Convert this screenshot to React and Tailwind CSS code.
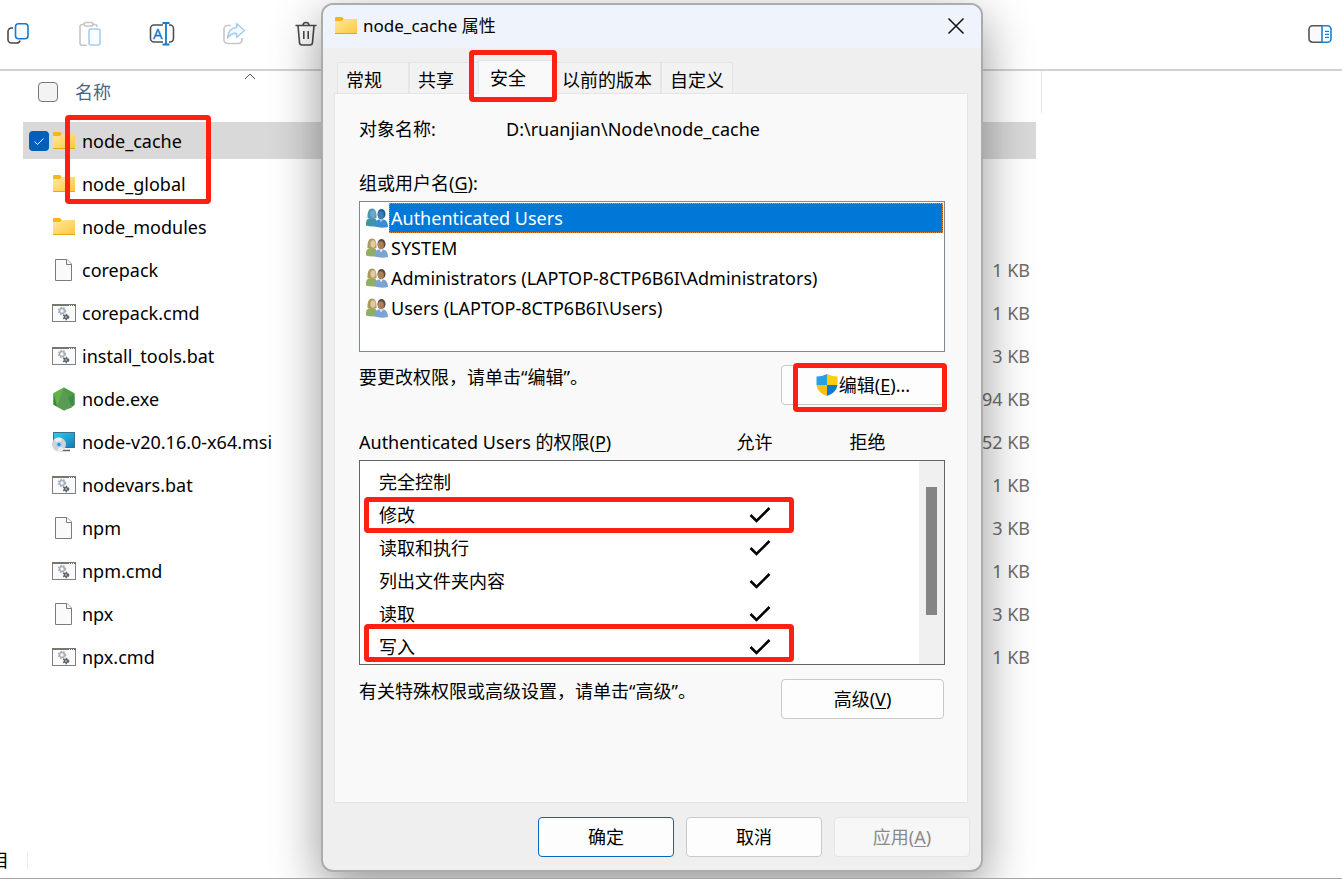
import React, { useState } from 'react';

const files = [
  { name: 'node_cache', type: 'folder', size: '' },
  { name: 'node_global', type: 'folder', size: '' },
  { name: 'node_modules', type: 'folder', size: '' },
  { name: 'corepack', type: 'file', size: '1 KB' },
  { name: 'corepack.cmd', type: 'script', size: '1 KB' },
  { name: 'install_tools.bat', type: 'script', size: '3 KB' },
  { name: 'node.exe', type: 'node', size: '94 KB' },
  { name: 'node-v20.16.0-x64.msi', type: 'installer', size: '52 KB' },
  { name: 'nodevars.bat', type: 'script', size: '1 KB' },
  { name: 'npm', type: 'file', size: '3 KB' },
  { name: 'npm.cmd', type: 'script', size: '1 KB' },
  { name: 'npx', type: 'file', size: '3 KB' },
  { name: 'npx.cmd', type: 'script', size: '1 KB' },
];

const users = [
  'Authenticated Users',
  'SYSTEM',
  'Administrators (LAPTOP-8CTP6B6I\\Administrators)',
  'Users (LAPTOP-8CTP6B6I\\Users)',
];

const permissions = [
  { name: '完全控制', allow: false },
  { name: '修改', allow: true },
  { name: '读取和执行', allow: true },
  { name: '列出文件夹内容', allow: true },
  { name: '读取', allow: true },
  { name: '写入', allow: true },
];

const tabs = ['常规', '共享', '安全', '以前的版本', '自定义'];

/* ---------- file icons ---------- */

const FolderIcon = () => (
  <svg width="24" height="24" viewBox="0 0 24 24" className="shrink-0">
    <defs>
      <linearGradient id="folder" x1="0" y1="0" x2="1" y2="1">
        <stop offset="0" stopColor="#ffe8a3" />
        <stop offset="1" stopColor="#fdc93b" />
      </linearGradient>
    </defs>
    <path d="M1 4q0-1 1-1h5.500q1 0 1.500 1l.8 1H22q1 0 1 1v4H1z" fill="#f7b519" />
    <path d="M1 7h7l1.500-2H23v14.500H1z" fill="url(#folder)" />
    <path d="M1 19.500h22" stroke="#eaa51c" />
  </svg>
);

const FileIcon = () => (
  <svg width="24" height="24" viewBox="0 0 24 24" className="shrink-0" fill="#fafafa" stroke="#7b7b78">
    <path d="M3.500 1.500h11.500l4.500 4.500v16.500h-16z" />
    <path d="M14.500 1.500v5h5" fill="#fff" />
  </svg>
);

const Gear = ({ cx, cy, r, color }) => (
  <g fill="none" stroke={color}>
    <circle cx={cx} cy={cy} r={r + 1} strokeWidth="1.600" strokeDasharray="1.500 1.300" />
    <circle cx={cx} cy={cy} r={r} strokeWidth="1.500" />
  </g>
);

const ScriptIcon = () => (
  <svg width="24" height="24" viewBox="0 0 24 24" className="shrink-0">
    <rect x="0.500" y="3.500" width="23" height="17" fill="#fafafa" stroke="#7f7f7f" />
    <path d="M0 4h24" stroke="#77776f" strokeWidth="2" />
    <path d="M17 4.500h5" stroke="#e8e8e8" strokeDasharray="1 1" />
    <Gear cx={10} cy={10} r={2.400} color="#a6b0ba" />
    <Gear cx={14} cy={16} r={1.500} color="#5c6368" />
  </svg>
);

const NodeIcon = () => (
  <svg width="24" height="24" viewBox="0 0 24 24" className="shrink-0">
    <path d="M12 0.500l10.500 5.700v11.600L12 23.500 1.500 17.800V6.200z" fill="#4f9b45" />
    <path d="M12 0.500l8 20L12 23.500 5 19.500z" fill="#5a9a55" />
    <path d="M12 0.500l-10.500 5.700L5 19.500z" fill="#63b14d" />
    <path d="M1.500 6.200L5 19.500l-3.500-2z" fill="#3c8440" />
    <path d="M22.500 7v10.800L20 20l-4-9z" fill="#418c46" />
  </svg>
);

const InstallerIcon = () => (
  <svg width="24" height="24" viewBox="0 0 24 24" className="shrink-0">
    <defs>
      <linearGradient id="screen" x1="0" y1="0" x2="1" y2="1">
        <stop offset="0" stopColor="#2fd0e6" />
        <stop offset="1" stopColor="#1479bd" />
      </linearGradient>
    </defs>
    <rect x="1.500" y="2.500" width="21" height="15" fill="url(#screen)" stroke="#3d6f86" />
    <path d="M9 20.500h9" stroke="#59656d" strokeWidth="1.500" />
    <circle cx="7" cy="14.500" r="7" fill="#cfd3d6" />
    <path d="M7 14.500L2 9.500a7 7 0 0 1 8-1.200zM7 14.500l5 5a7 7 0 0 1-6 2z" fill="#eceeef" />
    <circle cx="7" cy="14.500" r="3" fill="#a9d4f3" />
    <circle cx="7" cy="14.500" r="1.700" fill="#2c8fdb" />
  </svg>
);

const fileIcons = {
  folder: FolderIcon,
  file: FileIcon,
  script: ScriptIcon,
  node: NodeIcon,
  installer: InstallerIcon,
};

/* ---------- toolbar icons ---------- */

const CopyIcon = () => (
  <svg width="24" height="26" viewBox="0 0 24 26" fill="none" strokeWidth="1.600">
    <path d="M7 7H5.500A3.500 3.500 0 0 0 2 10.500v8A3.500 3.500 0 0 0 5.500 22h5q3 0 3.500-2.500" stroke="#4a4a4a" />
    <rect x="9.500" y="2.800" width="12.500" height="15" rx="3" fill="#f6fbff" stroke="#1779cf" />
  </svg>
);

const PasteIcon = () => (
  <svg width="24" height="26" viewBox="0 0 24 26" fill="none" strokeWidth="1.600">
    <path d="M6 3.500H4A2 2 0 0 0 2 5.500v16.700a2 2 0 0 0 2 2h5M14.500 3.500h2.500a2 2 0 0 1 2 2V6" stroke="#c6c6c6" />
    <rect x="6" y="1.500" width="9" height="3.500" rx="1.700" stroke="#c6c6c6" />
    <rect x="11" y="8" width="11" height="16" rx="2" fill="#fafdff" stroke="#a9cdec" />
  </svg>
);

const RenameIcon = () => (
  <svg width="26" height="26" viewBox="0 0 26 26" fill="none" strokeWidth="1.600" className="shrink-0">
    <path d="M14 4H5a3.500 3.500 0 0 0-3.500 3.500v10A3.500 3.500 0 0 0 5 21h9M20 4h1a3.500 3.500 0 0 1 3.500 3.500v10A3.500 3.500 0 0 1 21 21h-1" stroke="#505050" />
    <path d="M13.500 2h7M13.500 23.500h7M17 2v21.500" stroke="#1779cf" strokeWidth="1.800" />
    <text x="4" y="18" fontSize="15" fontFamily="Noto Sans, sans-serif" fill="#1779cf" stroke="#1779cf" strokeWidth="0.300">A</text>
  </svg>
);

const ShareIcon = () => (
  <svg width="24" height="26" viewBox="0 0 24 26" fill="none" strokeWidth="1.600" strokeLinejoin="round">
    <path d="M9 4.500H5.500A3.500 3.500 0 0 0 2 8v11a3.500 3.500 0 0 0 3.500 3.500h11A3.500 3.500 0 0 0 20 19v-2" stroke="#c6c6c6" />
    <path d="M14.500 2.500l8 7-8 7v-4C10.500 12 8 13.500 5.500 17c.5-6 3.500-10 9-10.500z" fill="#f5faff" stroke="#a9cdec" />
  </svg>
);

const TrashIcon = () => (
  <svg width="24" height="26" viewBox="0 0 24 26" fill="none" stroke="#4a4a4a" strokeWidth="1.600">
    <path d="M1.500 4.500h21M9 4.500q0-3 3-3t3 3M4 4.500l1.500 17q.2 2.500 2.500 2.500h8q2.300 0 2.500-2.500l1.500-17M9.800 10v8M14.200 10v8" />
  </svg>
);

const PreviewPaneIcon = () => (
  <svg width="24" height="20" viewBox="0 0 24 20" fill="none" strokeWidth="1.600">
    <path d="M14 1.800H4.500a3.500 3.500 0 0 0-3.500 3.500v9.400a3.500 3.500 0 0 0 3.500 3.500H14" fill="#fafafa" stroke="#555" />
    <path d="M14 1.800h5.500A3.500 3.500 0 0 1 23 5.300v9.400a3.500 3.500 0 0 1-3.500 3.500H14z" fill="#fff" stroke="#1582da" />
    <path d="M17 7.300h4M17 10.300h4M17 13.300h4" stroke="#1582da" strokeWidth="1.200" />
  </svg>
);

/* ---------- dialog icons ---------- */

const UsersIcon = ({ active }) => (
  <svg width="22" height="20" viewBox="0 0 22 20" className="shrink-0">
    <path d="M0 17.500Q-0.500 11 3 10.500h5.500q3 1 3 7.500-6 1-11.500-.5z" fill={active ? '#3f95a0' : '#8fae62'} />
    <path d="M1.500 10Q1 0.500 6 0.500t4.500 9.500Q6 12 1.500 10z" fill={active ? '#4f93b5' : '#a89a5c'} />
    <ellipse cx="7" cy="6" rx="2.600" ry="3.800" fill={active ? '#6ea9c9' : '#e3c8a0'} />
    <path d="M8.500 18.500Q9 12 12.500 11.500h5q4.500 1 4.500 7.500-7 1.500-13.500-.5z" fill={active ? '#3a8fd2' : '#7ba3d4'} />
    <ellipse cx="15.500" cy="6" rx="4" ry="5" fill={active ? '#1a5f9c' : '#5b4a3c'} />
    <ellipse cx="14.800" cy="7.300" rx="3" ry="4" fill={active ? '#3a7eb5' : '#ad8058'} />
    <path d="M13.500 11.500l1.500 3 2-3z" fill={active ? '#9dc8ea' : '#e3edf7'} />
  </svg>
);

const ShieldIcon = () => (
  <svg width="24" height="24" viewBox="0 0 24 24" className="shrink-0">
    <path d="M12 1Q7 3.500 1.500 3.500V12H12z" fill="#2a9fe0" />
    <path d="M12 1q5 2.500 10.500 2.500V12H12z" fill="#fdce0a" />
    <path d="M1.500 12q1 7.500 10.500 11V12z" fill="#fdbf12" />
    <path d="M22.500 12q-1 7.500-10.500 11V12z" fill="#1179cf" />
  </svg>
);

const CheckMark = () => (
  <svg width="22" height="18" viewBox="0 0 22 18" fill="none" stroke="#000" strokeWidth="2.600" role="img" aria-label="允许">
    <path d="M1.500 9l6 6L20.500 2" />
  </svg>
);

const Highlight = ({ className }) => (
  <div className={`pointer-events-none absolute rounded border-5 border-[#ff1f13] ${className}`} />
);

const buttonStyles = {
  normal: 'border-[#c9c9c9] bg-[#fdfdfd]',
  primary: 'border-[#0067c0] bg-[#fdfdfd]',
  disabled: 'border-[#e5e5e5] bg-[#f7f7f7] text-[#8a8a8a]',
};

const DialogButton = ({ variant = 'normal', className, children }) => (
  <button
    type="button"
    disabled={variant === 'disabled'}
    className={`flex h-10 items-center justify-center rounded border ${buttonStyles[variant]} ${className}`}
  >
    {children}
  </button>
);

const Key = ({ children }) => <span className="underline underline-offset-2">{children}</span>;

const PropertiesDialog = () => {
  const [activeUser, setActiveUser] = useState(users[0]);

  return (
    <div
      role="dialog"
      aria-label="node_cache 属性"
      className="absolute left-[321px] top-[3px] flex w-[662px] flex-col rounded-xl border-2 border-[#acacac] bg-[#efefef] text-black shadow-[0_16px_50px_rgba(0,0,0,0.42)]"
    >
      {/* Title bar */}
      <div className="flex h-[43px] items-center justify-between rounded-t-[10px] bg-[#eff3fb] pb-0.5 pl-[11px] pr-4">
        <div className="flex items-center gap-[5px]">
          <FolderIcon />
          <h1 className="text-[17px]">node_cache 属性</h1>
        </div>
        <button type="button" aria-label="关闭">
          <svg width="18" height="18" viewBox="0 0 18 18" stroke="#111" strokeWidth="1.500">
            <path d="M1.500 1.500l15 15M16.500 1.500l-15 15" />
          </svg>
        </button>
      </div>

      <div className="pb-[13px] pl-[11px] pr-[13px] pt-3">
        {/* Tabs */}
        <div role="tablist" className="flex items-end pl-[3px]">
          {tabs.map(tab =>
            tab === '安全' ? (
              <div key={tab} className="relative z-10 -mx-[3px] -mb-px">
                <button
                  type="button"
                  role="tab"
                  aria-selected="true"
                  className="h-[34px] min-w-[78px] border border-b-0 border-[#e5e5e5] bg-[#f9f9f9] px-[11px] text-left"
                >
                  {tab}
                </button>
                <Highlight className="-bottom-2 -left-[9px] -right-px -top-2.5" />
              </div>
            ) : (
              <button
                key={tab}
                type="button"
                role="tab"
                aria-selected="false"
                className="h-[31px] min-w-[72px] border border-b-0 border-[#e5e5e5] bg-[#f2f2f2] px-2 pt-1 text-left"
              >
                {tab}
              </button>
            )
          )}
        </div>

        {/* Security panel */}
        <div className="border border-[#e5e5e5] bg-[#f9f9f9] pb-[83px] pl-6 pr-[22px] pt-[23px]">
          <div className="flex">
            <span className="w-[147px]">对象名称:</span>
            <span>D:\ruanjian\Node\node_cache</span>
          </div>

          <div className="mt-[30px]">组或用户名(<Key>G</Key>):</div>
          <ul className="mt-1.5 h-[151px] border border-[#828790] bg-white p-px">
            {users.map(user => (
              <li key={user}>
                <button
                  type="button"
                  onClick={() => setActiveUser(user)}
                  className="flex h-[30px] w-full items-center gap-px pl-[5px] text-left"
                >
                  <UsersIcon active={user === activeUser} />
                  <span
                    className={
                      user === activeUser
                        ? 'flex h-full flex-1 items-center border border-dotted border-[#e28a3a] bg-[#0078d7] pl-px text-white'
                        : 'flex-1 pl-0.5'
                    }
                  >
                    {user}
                  </span>
                </button>
              </li>
            ))}
          </ul>

          <div className="mr-px mt-[13px] flex items-start justify-between">
            <span>要更改权限，请单击“编辑”。</span>
            <div className="relative">
              <DialogButton className="w-[163px]">
                <ShieldIcon />
                <span>编辑(<Key>E</Key>)...</span>
              </DialogButton>
              <Highlight className="-bottom-[7px] -right-[3px] -top-0.5 left-3" />
            </div>
          </div>

          <div className="mt-[25px] flex">
            <span className="flex-1">Authenticated Users 的权限(<Key>P</Key>)</span>
            <span className="w-[113px] text-center">允许</span>
            <span className="mr-[21px] w-[113px] text-center">拒绝</span>
          </div>
          <div className="relative mt-1.5 flex h-[205px] overflow-hidden border border-[#646464] bg-white">
            <table className="mt-1 flex-1 self-start">
              <tbody>
                {permissions.map(item => (
                  <tr key={item.name} className="h-[33px]">
                    <td className="p-0 pl-[19px]">{item.name}</td>
                    <td className="w-[170px] p-0">{item.allow && <CheckMark />}</td>
                  </tr>
                ))}
              </tbody>
            </table>
            <div className="w-[25px] bg-[#f0f0f0] pl-[7px] pt-[26px]">
              <div className="h-32 w-[11px] bg-[#858585]" />
            </div>
            <Highlight className="left-1 top-9 h-9 w-[430px]" />
            <Highlight className="bottom-0.5 left-1 h-[38px] w-[430px]" />
          </div>

          <div className="mr-px mt-[14px] flex items-start justify-between">
            <span>有关特殊权限或高级设置，请单击“高级”。</span>
            <DialogButton className="w-[163px]">
              <span>高级(<Key>V</Key>)</span>
            </DialogButton>
          </div>
        </div>

        {/* Actions */}
        <div className="-mr-0.5 mt-3.5 flex justify-end gap-3">
          <DialogButton variant="primary" className="w-[136px]">确定</DialogButton>
          <DialogButton className="w-[136px]">取消</DialogButton>
          <DialogButton variant="disabled" className="w-[136px]">
            <span>应用(<Key>A</Key>)</span>
          </DialogButton>
        </div>
      </div>
    </div>
  );
};

const toolbar = [
  { label: '复制', icon: CopyIcon },
  { label: '粘贴', icon: PasteIcon, disabled: true },
  { label: '重命名', icon: RenameIcon },
  { label: '共享', icon: ShareIcon, disabled: true },
  { label: '删除', icon: TrashIcon },
];

const FileTable = () => {
  const [selected, setSelected] = useState(['node_cache']);

  const toggle = (name) => {
    setSelected(selected.includes(name) ? selected.filter(n => n !== name) : [...selected, name]);
  };

  return (
    <div className="relative flex pl-[23px]">
      <table className="w-[1013px] table-fixed border-separate border-spacing-x-0 border-spacing-y-1.5">
        <thead>
          <tr className="h-[39px]">
            <th className="relative p-0 align-top font-normal">
              <div className="flex h-[30px] items-center gap-[17px] pl-[15px] text-[#4b6584]">
                <input
                  type="checkbox"
                  aria-label="全选"
                  className="size-5 appearance-none rounded border border-[#777] bg-[#f3f3f3]"
                />
                名称
              </div>
              <svg width="12" height="7" viewBox="0 0 12 7" fill="none" stroke="#555" className="absolute -top-1 left-[221px]">
                <path d="M1 6l5-5 5 5" />
              </svg>
            </th>
            <th className="w-[120px] p-0" aria-label="大小" />
          </tr>
        </thead>
        <tbody>
          {files.map(file => {
            const Icon = fileIcons[file.type];
            const isSelected = selected.includes(file.name);
            return (
              <tr key={file.name} className={isSelected ? 'h-[37px] bg-[#d9d9d9]' : 'h-[37px]'}>
                <td className="p-0">
                  <div className="flex items-center pl-1.5">
                    <span className="relative flex size-5">
                      <input
                        type="checkbox"
                        aria-label={file.name}
                        checked={isSelected}
                        onChange={() => toggle(file.name)}
                        className="size-5 appearance-none rounded checked:bg-[#005fb8]"
                      />
                      {isSelected && (
                        <svg width="20" height="20" viewBox="0 0 20 20" fill="none" stroke="#fff" className="pointer-events-none absolute inset-0">
                          <path d="M5.500 10.500l3 3 6-6" />
                        </svg>
                      )}
                    </span>
                    <span className="ml-[3px] mr-1.5"><Icon /></span>
                    {file.name}
                  </div>
                </td>
                <td className="p-0 pr-1.5 text-right text-[#6d6d6d]">{file.size}</td>
              </tr>
            );
          })}
        </tbody>
      </table>
      <div className="ml-[5px] h-[42px] w-px bg-[#e5e5e5]" />
      <Highlight className="left-[65px] top-11 h-[89px] w-[146px]" />
    </div>
  );
};

const App = () => {
  return (
    <div className="relative flex min-h-screen flex-col overflow-hidden border-b border-[#a5a5a5] bg-white font-['Noto_Sans','Noto_Sans_CJK_SC',sans-serif] text-[18px] leading-6 text-black">
      {/* Command bar */}
      <div className="flex h-[71px] items-center justify-between border-b-2 border-[#d2d2d2] pb-0.5 pl-1.5 pr-2.5">
        <div className="flex items-center gap-12">
          {toolbar.map(({ label, icon: Icon, disabled }) => (
            <button key={label} type="button" aria-label={label} disabled={disabled} className="flex w-6 justify-center">
              <Icon />
            </button>
          ))}
        </div>
        <button type="button" aria-label="预览窗格">
          <PreviewPaneIcon />
        </button>
      </div>

      <FileTable />

      {/* Status bar */}
      <div className="mt-auto flex items-center gap-[18px] pb-1.5">
        <span className="-ml-[9px]">目</span>
        <div className="h-[17px] w-px bg-[#ececec]" />
      </div>

      <PropertiesDialog />
    </div>
  );
};

export default App;
